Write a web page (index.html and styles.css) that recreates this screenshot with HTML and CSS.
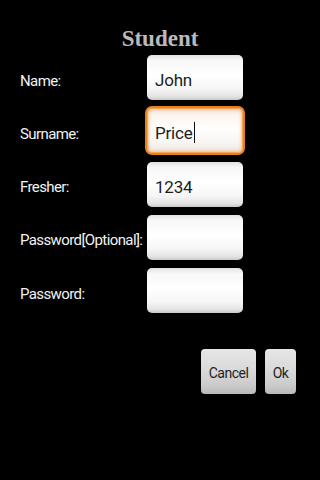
FILE: index.html
```html
<!DOCTYPE html>
<html lang="en">
<head>
<meta charset="utf-8">
<title>Student</title>
<link rel="stylesheet" href="styles.css">
</head>
<body>
<div class="screen">
  <h1 class="title">Student</h1>
  <div class="form">
    <div class="label">Name:</div>
    <div class="field"><span class="value">John</span></div>

    <div class="label">Surname:</div>
    <div class="field field-focused"><span class="value">Price</span><span class="caret"></span></div>

    <div class="label">Fresher:</div>
    <div class="field"><span class="value">1234</span></div>

    <div class="label">Password[Optional]:</div>
    <div class="field"></div>

    <div class="label">Password:</div>
    <div class="field"></div>
  </div>
  <div class="actions">
    <button class="btn btn-cancel">Cancel</button>
    <button class="btn btn-ok">Ok</button>
  </div>
</div>
</body>
</html>
```
FILE: styles.css
```css
html, body {
  margin: 0;
  padding: 0;
  background: #000;
}

.screen {
  width: 320px;
  height: 480px;
  background: #000;
  overflow: hidden;
}

.title {
  margin: 26px 0 0;
  font-family: "Liberation Serif", "Times New Roman", serif;
  font-weight: bold;
  font-size: 23px;
  line-height: 26px;
  color: #bababa;
  text-align: center;
}

.form {
  display: grid;
  grid-template-columns: 127px 96px;
  grid-auto-rows: 45px;
  row-gap: 8.33px;
  margin-top: 3px;
  padding-left: 20px;
}

.label {
  display: flex;
  align-items: center;
  padding-top: 6px;
  box-sizing: border-box;
  font-family: Roboto, "Noto Sans", sans-serif;
  font-size: 15px;
  letter-spacing: -0.6px;
  color: #f2f2f2;
  white-space: nowrap;
}

.field {
  display: flex;
  align-items: center;
  box-sizing: border-box;
  padding: 5px 8px 0;
  border-radius: 5px;
  background: linear-gradient(#e2e2e2 0%, #f7f7f7 12%, #ffffff 45%, #f6f6f6 75%, #e4e4e4 92%, #c9c9c9 100%);
  font-family: Roboto, "Noto Sans", sans-serif;
  font-size: 17px;
  letter-spacing: -0.2px;
  color: #1c1c1c;
}

.field-focused {
  background: linear-gradient(#f3e3d6 0%, #fbf3ee 15%, #ffffff 45%, #f8f6f4 75%, #ece6e0 100%);
  box-shadow: 0 0 0 2px #e9801a, inset 0 0 0 1px #f5a55a, inset 0 0 3px 2px #f7c08c;
}

.caret {
  display: inline-block;
  width: 0;
  height: 21px;
  border-left: 1.5px solid #111;
  margin-left: 1px;
  margin-top: -1px;
}

.actions {
  display: flex;
  justify-content: flex-end;
  gap: 9px;
  margin-top: 35.7px;
  padding-right: 24px;
}

.btn {
  height: 45px;
  padding: 3px 0 0;
  border: none;
  border-radius: 4px;
  background: linear-gradient(#e6e6e6 0%, #dadada 45%, #cbcbcb 80%, #b9b9b9 100%);
  font-family: Roboto, "Noto Sans", sans-serif;
  font-size: 14px;
  letter-spacing: -0.5px;
  color: #1e1e1e;
  text-align: center;
}

.btn-cancel {
  width: 55px;
}

.btn-ok {
  width: 31px;
}
```
